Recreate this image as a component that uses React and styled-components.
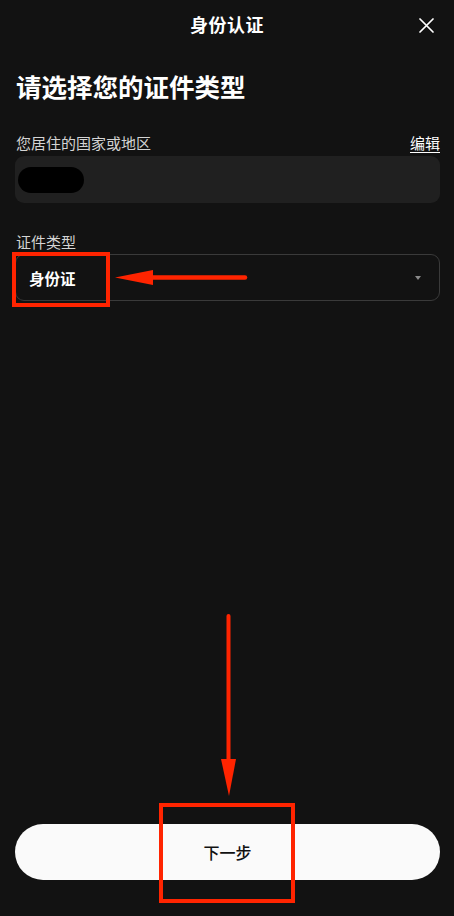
import styled, { createGlobalStyle } from "styled-components";

const GlobalStyle = createGlobalStyle`
  html, body {
    margin: 0;
    padding: 0;
    background: #121212;
  }
  body {
    font-family: "Noto Sans CJK SC", "Noto Sans", sans-serif;
    color: #ffffff;
  }
`;

const Page = styled.div`
  position: relative;
  display: flex;
  flex-direction: column;
  width: 454px;
  height: 916px;
  background: #121212;
  overflow: hidden;
`;

const Header = styled.header`
  display: grid;
  grid-template-columns: 1fr auto 1fr;
  align-items: center;
  height: 50px;
  padding: 0 20px 0 20px;
`;

const Title = styled.h1`
  grid-column: 2;
  margin: -2px 0 0 0;
  font-size: 18px;
  font-weight: 700;
  line-height: 50px;
  letter-spacing: 0.5px;
`;

const CloseButton = styled.button`
  grid-column: 3;
  justify-self: end;
  display: flex;
  padding: 0;
  border: none;
  background: none;
  color: #ffffff;
  cursor: pointer;
`;

const Content = styled.main`
  display: flex;
  flex-direction: column;
  flex: 1;
  padding: 18px 14px 0 15px;
`;

const Heading = styled.h2`
  margin: 0 0 0 1px;
  font-size: 25.5px;
  font-weight: 700;
  line-height: 36px;
`;

const LabelRow = styled.div`
  display: flex;
  justify-content: space-between;
  align-items: center;
  margin-top: ${(props) => props.$gap}px;
  padding-left: 1px;
  height: 22px;
`;

const Label = styled.span`
  font-size: 15px;
  color: #d4d4d4;
  line-height: 22px;
`;

const EditLink = styled.a`
  font-size: 15px;
  color: #ffffff;
  line-height: 22px;
  text-decoration: underline;
  text-underline-offset: 3px;
  cursor: pointer;
`;

const ReadonlyField = styled.div`
  display: flex;
  align-items: center;
  height: 47px;
  margin-top: 2px;
  padding: 0 3px;
  border-radius: 9px;
  background: #202020;
`;

const Redacted = styled.div`
  width: 66px;
  height: 26px;
  border-radius: 13px;
  background: #000000;
`;

const Select = styled.div`
  display: flex;
  align-items: center;
  justify-content: space-between;
  box-sizing: border-box;
  height: 47px;
  margin-top: 1px;
  padding: 0 18px 0 13px;
  border: 1px solid #3a3a3a;
  border-radius: 9px;
`;

const SelectValue = styled.span`
  font-size: 15.5px;
  font-weight: 700;
  color: #ffffff;
`;

const Caret = styled.span`
  width: 0;
  height: 0;
  border-left: 3.5px solid transparent;
  border-right: 3.5px solid transparent;
  border-top: 4px solid #8a8a8a;
`;

const Footer = styled.footer`
  padding: 0 14px 36px 15px;
`;

const PrimaryButton = styled.button`
  width: 100%;
  height: 56px;
  border: none;
  border-radius: 28px;
  background: #fafafa;
  color: #111111;
  font-family: inherit;
  font-size: 16px;
  font-weight: 500;
  cursor: pointer;
`;

const Highlight = styled.div`
  position: absolute;
  top: ${(props) => props.$top}px;
  left: ${(props) => props.$left}px;
  width: ${(props) => props.$width}px;
  height: ${(props) => props.$height}px;
  box-sizing: border-box;
  border: 4px solid #ff2400;
  pointer-events: none;
`;

const ArrowLayer = styled.svg`
  position: absolute;
  top: 0;
  left: 0;
  pointer-events: none;
`;

const App = () => {
  return (
    <>
      <GlobalStyle />
      <Page>
        <Header>
          <Title>身份认证</Title>
          <CloseButton aria-label="关闭">
            <svg width="15" height="15" viewBox="0 0 15 15">
              <path
                d="M1 1 L14 14 M14 1 L1 14"
                stroke="currentColor"
                strokeWidth="1.7"
                strokeLinecap="round"
              />
            </svg>
          </CloseButton>
        </Header>

        <Content>
          <Heading>请选择您的证件类型</Heading>

          <LabelRow $gap={28}>
            <Label>您居住的国家或地区</Label>
            <EditLink>编辑</EditLink>
          </LabelRow>
          <ReadonlyField>
            <Redacted />
          </ReadonlyField>

          <LabelRow $gap={28}>
            <Label>证件类型</Label>
          </LabelRow>
          <Select>
            <SelectValue>身份证</SelectValue>
            <Caret />
          </Select>
        </Content>

        <Footer>
          <PrimaryButton>下一步</PrimaryButton>
        </Footer>

        <Highlight $top={252} $left={12} $width={98} $height={55} />
        <Highlight $top={803} $left={159} $width={136} $height={100} />

        <ArrowLayer width="454" height="916" viewBox="0 0 454 916">
          <line
            x1="245"
            y1="277.5"
            x2="150"
            y2="277.5"
            stroke="#ff2400"
            strokeWidth="4.5"
            strokeLinecap="round"
          />
          <polygon points="115,277.5 153,270 153,285" fill="#ff2400" />
          <line
            x1="228.5"
            y1="616"
            x2="228.5"
            y2="762"
            stroke="#ff2400"
            strokeWidth="4"
            strokeLinecap="round"
          />
          <polygon points="221,759 236,759 229,796" fill="#ff2400" />
        </ArrowLayer>
      </Page>
    </>
  );
};

export default App;
